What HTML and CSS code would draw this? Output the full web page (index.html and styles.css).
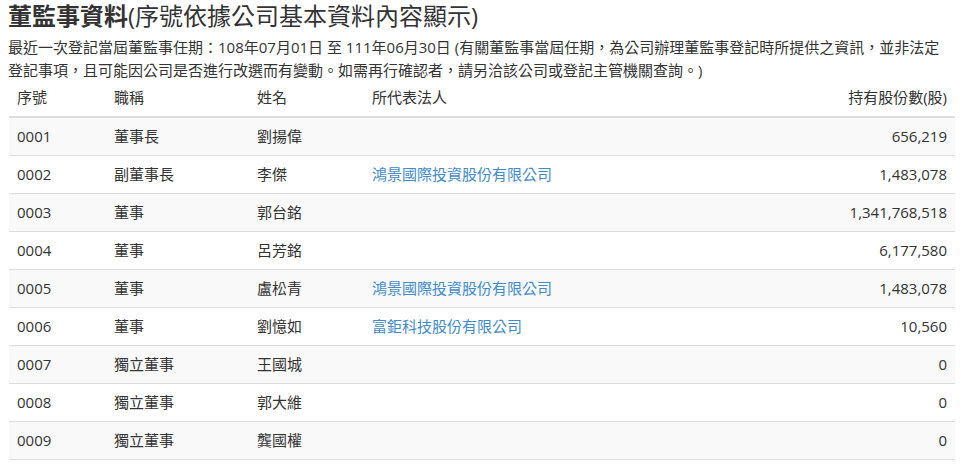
FILE: index.html
```html
<!DOCTYPE html>
<html lang="zh-Hant">
<head>
<meta charset="utf-8">
<link rel="stylesheet" href="styles.css">
</head>
<body>
<div class="wrap">
  <h3 class="title"><b>董監事資料</b>(序號依據公司基本資料內容顯示)</h3>
  <p class="note">最近一次登記當屆董監事任期：108年07月01日 至 111年06月30日 (有關董監事當屆任期，為公司辦理董監事登記時所提供之資訊，並非法定登記事項，且可能因公司是否進行改選而有變動。如需再行確認者，請另洽該公司或登記主管機關查詢。)</p>
  <table class="grid">
    <thead>
      <tr><th class="c1">序號</th><th class="c2">職稱</th><th class="c3">姓名</th><th class="c4">所代表法人</th><th class="num">持有股份數(股)</th></tr>
    </thead>
    <tbody>
      <tr><td>0001</td><td>董事長</td><td>劉揚偉</td><td></td><td class="num">656,219</td></tr>
      <tr><td>0002</td><td>副董事長</td><td>李傑</td><td><a href="#">鴻景國際投資股份有限公司</a></td><td class="num">1,483,078</td></tr>
      <tr><td>0003</td><td>董事</td><td>郭台銘</td><td></td><td class="num">1,341,768,518</td></tr>
      <tr><td>0004</td><td>董事</td><td>呂芳銘</td><td></td><td class="num">6,177,580</td></tr>
      <tr><td>0005</td><td>董事</td><td>盧松青</td><td><a href="#">鴻景國際投資股份有限公司</a></td><td class="num">1,483,078</td></tr>
      <tr><td>0006</td><td>董事</td><td>劉憶如</td><td><a href="#">富鉅科技股份有限公司</a></td><td class="num">10,560</td></tr>
      <tr><td>0007</td><td>獨立董事</td><td>王國城</td><td></td><td class="num">0</td></tr>
      <tr><td>0008</td><td>獨立董事</td><td>郭大維</td><td></td><td class="num">0</td></tr>
      <tr><td>0009</td><td>獨立董事</td><td>龔國權</td><td></td><td class="num">0</td></tr>
    </tbody>
  </table>
</div>
</body>
</html>
```
FILE: styles.css
```css
html, body {
  margin: 0;
  padding: 0;
  background: #fff;
}
body {
  font-family: "Open Sans", "Noto Sans CJK TC", sans-serif;
  font-size: 15px;
  color: #333;
}
.wrap {
  width: 946px;
  padding: 0 0 0 9px;
}
.title {
  margin: 0 0 0 -1px;
  font-size: 24px;
  font-weight: 400;
  line-height: 32px;
  color: #333;
}
.title b {
  font-weight: 700;
}
.note {
  margin: 4px 0 0 -1px;
  padding-right: 10px;
  line-height: 23px;
}
.grid {
  width: 100%;
  border-collapse: collapse;
  table-layout: fixed;
  margin: 0;
}
.grid th, .grid td {
  text-align: left;
  padding: 8px;
  line-height: 21px;
  font-weight: 400;
  vertical-align: middle;
}
.grid th {
  padding-top: 5px;
  border-bottom: 2px solid #ddd;
}
.grid td {
  border-bottom: 1px solid #ddd;
}
.grid tbody tr:nth-child(odd) {
  background: #f9f9f9;
}
.grid .c1 { width: 81px; }
.grid .c2 { width: 127px; }
.grid .c3 { width: 99px; }
.grid .num { text-align: right; }
.grid a {
  color: #428bca;
  text-decoration: none;
}
```
